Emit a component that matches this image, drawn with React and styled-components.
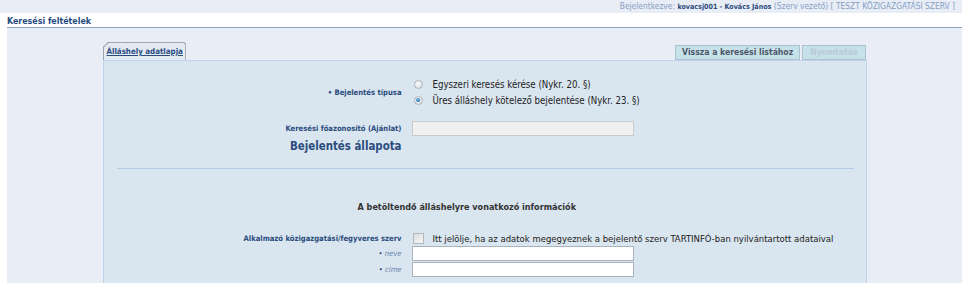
import React from "react";
import styled, { createGlobalStyle } from "styled-components";

const Global = createGlobalStyle`
  html, body { margin: 0; padding: 0; background: #fff; }
  body { font-family: "DejaVu Sans Condensed", "DejaVu Sans", sans-serif; font-size: 9px; }
  * { box-sizing: border-box; }
`;

const TopBar = styled.div`
  width: 962px;
  height: 13px;
  background: #e9edf5;
  color: #85a0c6;
  font-size: 8.4px;
  line-height: 13px;
  text-align: right;
  padding-right: 7px;
  white-space: nowrap;
`;

const UserName = styled.b`
  color: #2b4c7e;
  font-size: 7.1px;
`;

const Main = styled.div`
  margin: 3px 7px 0 7px;
`;

const Title = styled.div`
  height: 12px;
  font-weight: bold;
  font-size: 8.8px;
  line-height: 11px;
  color: #264a80;
  border-bottom: 1px solid #8ea3c4;
`;

const Content = styled.div`
  background: #e9edf5;
  height: 255px;
  padding-top: 14px;
  display: flex;
  justify-content: center;
`;

const Sheet = styled.div`
  width: 764px;
  display: flex;
  flex-direction: column;
`;

const TabRow = styled.div`
  display: flex;
  align-items: flex-end;
  justify-content: space-between;
  height: 18px;
`;

const Tab = styled.div`
  position: relative;
  height: 18px;
  padding: 0 2px 0 3px;
  background: #e3eaf2;
  border: 1px solid #9ba6b4;
  border-bottom: none;
  border-radius: 0 3px 0 0;
  clip-path: polygon(5px 0, 100% 0, 100% 100%, 0 100%, 0 5px);
  font-weight: bold;
  font-size: 7.9px;
  line-height: 17px;
  color: #2b4c82;
  text-decoration: underline;
  &::before {
    content: "";
    position: absolute;
    left: -1px;
    top: -1px;
    width: 8px;
    height: 1px;
    background: #9ba6b4;
    transform-origin: 0 0;
    transform: translate(0px, 5px) rotate(-45deg);
  }
`;

const Buttons = styled.div`
  display: flex;
  gap: 2px;
  margin-right: 1px;
`;

const Button = styled.div`
  height: 15px;
  padding: 0 ${(p) => p.$pad || 6}px;
  background: #c7e1ea;
  border: 1px solid #aac3cf;
  font-weight: bold;
  font-size: 8.6px;
  line-height: 13px;
  color: ${(p) => (p.$disabled ? "#b9cbd4" : "#4c5868")};
  white-space: nowrap;
`;

const Panel = styled.div`
  flex: 1;
  background: #d9e5ef;
  border: 1px solid #bfd3ea;
  border-bottom: none;
  padding-top: 17px;
`;

const Rows = styled.div`
  display: grid;
  grid-template-columns: 298px 1fr;
  column-gap: 10px;
  row-gap: ${(p) => p.$gap || 0}px;
  align-items: center;
  margin-top: ${(p) => p.$top || 0}px;
`;

const Label = styled.div`
  text-align: right;
  font-weight: ${(p) => (p.$italic ? "normal" : "bold")};
  font-style: ${(p) => (p.$italic ? "italic" : "normal")};
  font-size: 7.6px;
  color: ${(p) => (p.$italic ? "#6a86b0" : "#2b4c7e")};
  white-space: nowrap;
`;

const Bullet = styled.span`
  color: #2b4c7e;
  font-style: normal;
`;

const BigLabel = styled.div`
  margin-top: 1px;
  text-align: right;
  font-weight: bold;
  font-size: 11.4px;
  color: #2b4c7e;
  line-height: 18px;
  white-space: nowrap;
`;

const Radios = styled.div`
  display: flex;
  flex-direction: column;
  gap: 4px;
  padding-left: 2px;
`;

const RadioRow = styled.div`
  display: flex;
  align-items: center;
  gap: 10px;
  height: 12px;
  font-size: 9.6px;
  color: #222;
  white-space: nowrap;
`;

const Radio = styled.span`
  width: 9px;
  height: 9px;
  border-radius: 50%;
  border: 1px solid #b2b7bd;
  background: radial-gradient(circle at 40% 35%, #fafafa 0%, #e2e4e6 65%, #cfd2d5 100%);
  display: flex;
  align-items: center;
  justify-content: center;
  &::after {
    content: "";
    width: 4px;
    height: 4px;
    border-radius: 50%;
    background: radial-gradient(circle at 40% 35%, #6ab8e8, #1c5a9c);
    display: ${(p) => (p.$checked ? "block" : "none")};
  }
`;

const Input = styled.div`
  width: 222px;
  height: 15px;
  background: ${(p) => (p.$disabled ? "#f0f0f0" : "#ffffff")};
  border: 1px solid ${(p) => (p.$disabled ? "#c8cacc" : "#a9b3bd")};
`;

const Divider = styled.div`
  margin: 13px 12px 0 13px;
  height: 1px;
  background: #b3cbe6;
`;

const SectionTitle = styled.div`
  margin-top: 32px;
  padding-left: 254px;
  font-weight: bold;
  font-size: 9px;
  color: #333;
  line-height: 12px;
`;

const CheckRow = styled.div`
  display: flex;
  align-items: center;
  gap: 9px;
  height: 13px;
  padding-left: 1px;
  font-size: 9.45px;
  color: #222;
  white-space: nowrap;
`;

const Check = styled.span`
  width: 11px;
  height: 11px;
  border: 1px solid #b4b8bd;
  background: linear-gradient(135deg, #d9dcdf, #f7f8f9);
`;

export default function App() {
  return (
    <>
      <Global />
      <TopBar>
        Bejelentkezve: <UserName>kovacsj001 - Kovács János</UserName> (Szerv vezető) [ TESZT KÖZIGAZGATÁSI SZERV ]
      </TopBar>
      <Main>
        <Title>Keresési feltételek</Title>
        <Content>
          <Sheet>
            <TabRow>
              <Tab>Álláshely adatlapja</Tab>
              <Buttons>
                <Button>Vissza a keresési listához</Button>
                <Button $disabled $pad={7}>Nyomtatás</Button>
              </Buttons>
            </TabRow>
            <Panel>
              <Rows>
                <Label>• Bejelentés típusa</Label>
                <Radios>
                  <RadioRow>
                    <Radio />
                    Egyszeri keresés kérése (Nykr. 20. §)
                  </RadioRow>
                  <RadioRow>
                    <Radio $checked />
                    Üres álláshely kötelező bejelentése (Nykr. 23. §)
                  </RadioRow>
                </Radios>
              </Rows>
              <Rows $top={15}>
                <Label>Keresési főazonosító (Ajánlat)</Label>
                <Input $disabled />
                <BigLabel>Bejelentés állapota</BigLabel>
                <div />
              </Rows>
              <Divider />
              <SectionTitle>A betöltendő álláshelyre vonatkozó információk</SectionTitle>
              <Rows $top={19} $gap={1}>
                <Label>Alkalmazó közigazgatási/fegyveres szerv</Label>
                <CheckRow>
                  <Check />
                  Itt jelölje, ha az adatok megegyeznek a bejelentő szerv TARTINFÓ-ban nyilvántartott adataival
                </CheckRow>
                <Label $italic><Bullet>•</Bullet> neve</Label>
                <Input />
                <Label $italic><Bullet>•</Bullet> címe</Label>
                <Input />
              </Rows>
            </Panel>
          </Sheet>
        </Content>
      </Main>
    </>
  );
}
